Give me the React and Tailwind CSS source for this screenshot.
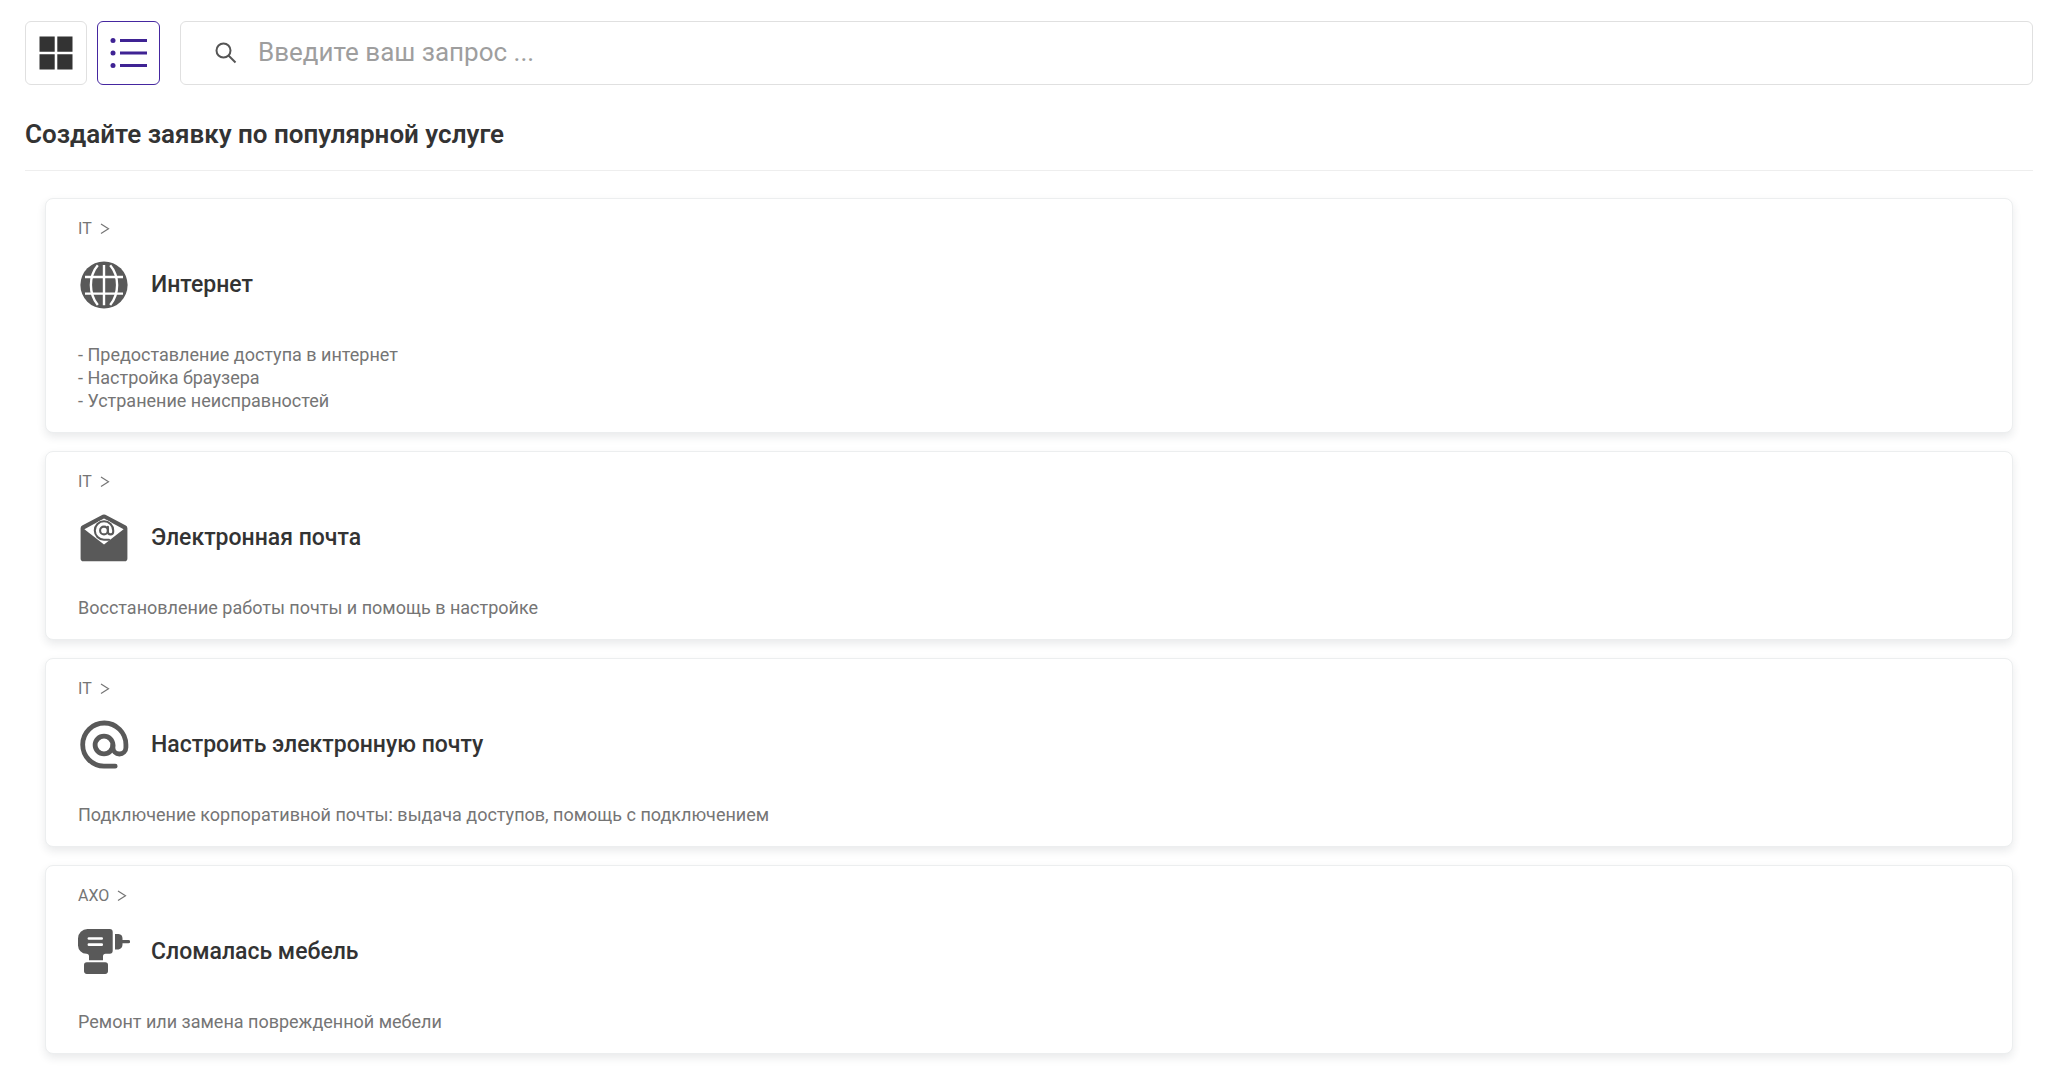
import React, { useState } from 'react';

const GlobeIcon = () => (
  <svg viewBox="0 0 52 52" className="h-13 w-13 shrink-0" fill="none" aria-hidden="true">
    <circle cx="26" cy="26" r="23.6" fill="#595959" />
    <g stroke="#ffffff" strokeWidth="2.4">
      <path d="M26 6v40.3M7 18h38M7 34.6h38" />
      <path d="M19.8 6.2C10.6 17 10.6 35 19.8 46M32.2 6.2C41.4 17 41.4 35 32.2 46" />
    </g>
  </svg>
);

const MailIcon = () => (
  <svg viewBox="0 0 52 52" className="h-13 w-13 shrink-0" fill="none" aria-hidden="true">
    <path
      d="M24.6 2.8a2.8 2.8 0 0 1 2.8 0L47.8 13.6a3 3 0 0 1 1.6 2.6V46.4a2.8 2.8 0 0 1-2.8 2.8H5.4a2.8 2.8 0 0 1-2.8-2.8V16.2a3 3 0 0 1 1.6-2.6z"
      fill="#595959"
    />
    <path d="M26 6.5L45.6 17.3 26 32.6 6.4 17.3z" fill="#ffffff" />
    <circle cx="26" cy="18.5" r="10.6" fill="#ffffff" />
    <g stroke="#595959" strokeWidth="2.1" strokeLinecap="round">
      <circle cx="26" cy="18.5" r="3.9" />
      <path d="M31 27.7H26A9.2 9.2 0 1 1 35.2 18.5V19.7a2.65 2.65 0 0 1-5.3 0V14.8" />
    </g>
  </svg>
);

const AtIcon = () => (
  <svg viewBox="0 0 52 52" className="h-13 w-13 shrink-0" fill="none" aria-hidden="true">
    <g stroke="#595959" strokeWidth="4.8" strokeLinecap="round">
      <circle cx="26" cy="26" r="8.9" />
      <path d="M37.2 47.2H26A21.6 21.6 0 1 1 47.9 25.6V28.5a6.5 6.5 0 0 1-13 0V26" />
    </g>
  </svg>
);

const DrillIcon = () => (
  <svg viewBox="0 0 52 52" className="h-13 w-13 shrink-0" aria-hidden="true">
    <path
      d="M9.5 3H31.7a3 3 0 0 1 3 3V24.7a3 3 0 0 1-3 3H27.5q-2.5 0-2.5 2.5V34.3H11V30.2q0-2.5-2.5-2.5A8.5 8.5 0 0 1 0 19V12.5A9.5 9.5 0 0 1 9.5 3z"
      fill="#595959"
    />
    <rect x="6" y="36.3" width="24" height="11.6" rx="2.8" fill="#595959" />
    <path
      d="M37 8H40.5a4.5 4.5 0 0 1 4 4.5V14H50.5a1.6 1.6 0 0 1 0 3.3H44.5V18.5a5 5 0 0 1-4 4.9H37z"
      fill="#595959"
    />
    <rect x="9.6" y="11.2" width="15.4" height="2.6" rx="1.2" fill="#ffffff" />
    <rect x="9.6" y="17.3" width="15.4" height="2.6" rx="1.2" fill="#ffffff" />
  </svg>
);

const services = [
  {
    id: 'internet',
    category: 'IT',
    title: 'Интернет',
    icon: GlobeIcon,
    description: ['- Предоставление доступа в интернет', '- Настройка браузера', '- Устранение неисправностей'],
  },
  {
    id: 'mail',
    category: 'IT',
    title: 'Электронная почта',
    icon: MailIcon,
    description: ['Восстановление работы почты и помощь в настройке'],
  },
  {
    id: 'mail-setup',
    category: 'IT',
    title: 'Настроить электронную почту',
    icon: AtIcon,
    description: ['Подключение корпоративной почты: выдача доступов, помощь с подключением'],
  },
  {
    id: 'furniture',
    category: 'АХО',
    title: 'Сломалась мебель',
    icon: DrillIcon,
    description: ['Ремонт или замена поврежденной мебели'],
  },
];

const ServiceCard = ({ service }) => {
  const Icon = service.icon;

  return (
    <article className="rounded-lg border border-[#eceeef] bg-white px-8 py-5 shadow-[0_4px_8px_rgba(38,50,56,0.1)]">
      <a href="#" className="flex items-center gap-2 text-base leading-5 text-[#757575]">
        {service.category}
        <svg viewBox="0 0 10 12" className="h-3 w-2.5" fill="none" stroke="#757575" strokeWidth="1.2" aria-hidden="true">
          <path d="M1 1L8.5 5.8 1 10.6" />
        </svg>
      </a>

      <div className="mt-5 flex items-center gap-[21px]">
        <Icon />
        <h2 className="text-[23px] leading-8 font-medium text-[#333333]">{service.title}</h2>
      </div>

      <div className="mt-8 text-lg leading-[23px] text-[#757575]">
        {service.description.map((line) => (
          <p key={line}>{line}</p>
        ))}
      </div>
    </article>
  );
};

const App = () => {
  const [view, setView] = useState('list');

  return (
    <main className="min-h-screen bg-white pt-[21px] pr-[15px] pb-3 pl-[25px] font-['Roboto',sans-serif]">
      {/* Toolbar */}
      <div className="flex h-16 items-stretch">
        <button
          type="button"
          aria-label="Плитка"
          onClick={() => setView('grid')}
          className={
            view === 'grid'
              ? 'flex w-[62px] items-center justify-center rounded-md border border-[#4527a0] text-[#3f2394]'
              : 'flex w-[62px] items-center justify-center rounded-md border border-[#e0e0e0] text-[#333333]'
          }
        >
          <svg viewBox="0 0 34 34" className="h-[34px] w-[34px]" fill="currentColor" aria-hidden="true">
            <path d="M0.5 0.5h15.2v15.2H0.5zM18.3 0.5h15.2v15.2H18.3zM0.5 18.3h15.2v15.2H0.5zM18.3 18.3h15.2v15.2H18.3z" />
          </svg>
        </button>
        <button
          type="button"
          aria-label="Список"
          onClick={() => setView('list')}
          className={
            view === 'list'
              ? 'ml-2.5 flex w-[63px] items-center justify-center rounded-md border border-[#4527a0] text-[#3f2394]'
              : 'ml-2.5 flex w-[63px] items-center justify-center rounded-md border border-[#e0e0e0] text-[#333333]'
          }
        >
          <svg viewBox="0 0 38 32" className="h-8 w-[38px]" fill="currentColor" aria-hidden="true">
            <circle cx="3" cy="3.5" r="2.5" />
            <circle cx="3" cy="16" r="2.5" />
            <circle cx="3" cy="28.5" r="2.5" />
            <path d="M10 2h27v3H10zM10 14.500h27v3H10zM10 27h27v3H10z" />
          </svg>
        </button>

        <label className="ml-5 flex flex-1 items-center rounded-md border border-[#e0e0e0] bg-white pl-8">
          <svg viewBox="0 0 24 24" className="h-6 w-6 shrink-0" fill="none" stroke="#555555" strokeWidth="2" aria-hidden="true">
            <circle cx="10.5" cy="9.5" r="7" />
            <path d="M15.5 14.5L22.5 21.5" />
          </svg>
          <input
            type="search"
            aria-label="Поиск"
            placeholder="Введите ваш запрос ..."
            className="ml-[21px] min-w-0 flex-1 bg-transparent pb-0.5 text-[26px] leading-8 text-[#333333] outline-none placeholder:text-[#9e9e9e]"
          />
        </label>
      </div>

      {/* Popular services */}
      <h1 className="mt-[33px] border-b border-[#eeeeee] pb-5 text-[26px] leading-8 font-semibold text-[#333333]">
        Создайте заявку по популярной услуге
      </h1>

      <section className="mt-[27px] flex flex-col gap-[18px] px-5">
        {services.map((service) => (
          <ServiceCard key={service.id} service={service} />
        ))}
      </section>
    </main>
  );
};

export default App;
